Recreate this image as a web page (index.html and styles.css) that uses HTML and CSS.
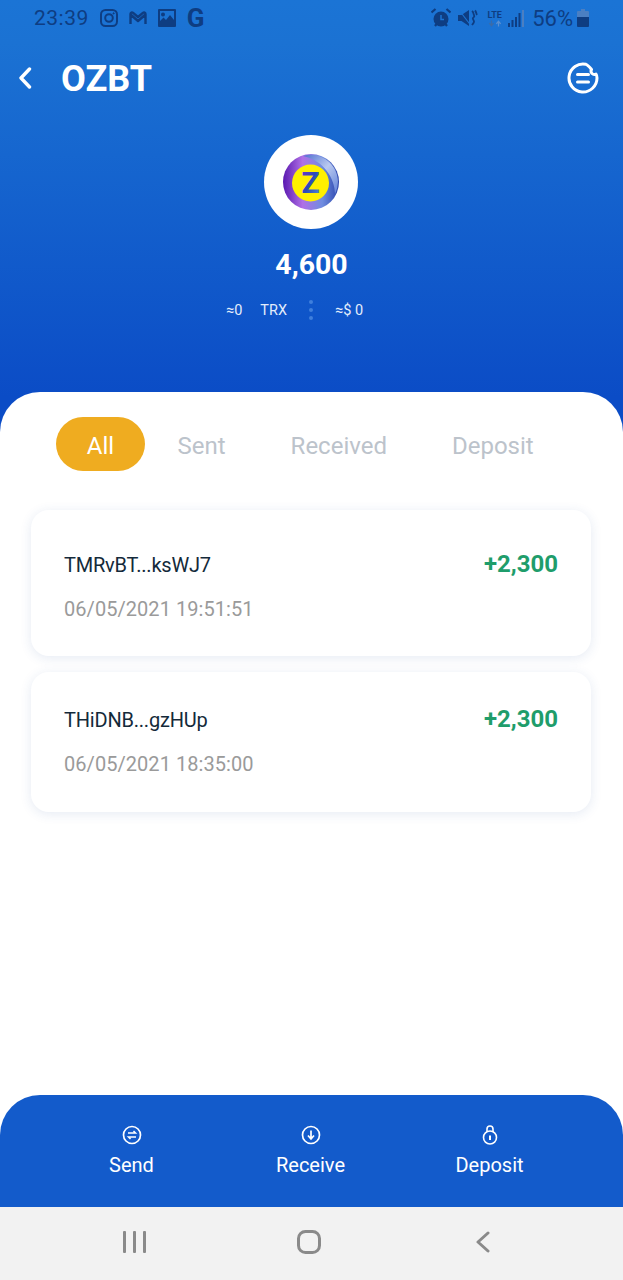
FILE: index.html
```html
<!DOCTYPE html>
<html lang="en">
<head>
    <meta charset="UTF-8">
    <meta name="viewport" content="width=device-width, initial-scale=1.0">
    <title>OZBT</title>
    <link rel="stylesheet" href="styles.css">
</head>
<body>
<div class="app">
    <div class="hero">
        <!-- Android status bar -->
        <div class="status">
            <div class="status-left">
                <span class="time">23:39</span>
                <svg class="ico" viewBox="0 0 18 18" fill="none" stroke="#0e3d82" stroke-width="2"><rect x="1" y="1" width="16" height="16" rx="4.5"/><circle cx="9" cy="9" r="3.8"/><circle cx="13.6" cy="4.4" r=".6" fill="#0e3d82" stroke-width="1"/></svg>
                <svg class="ico" viewBox="0 0 18 18" fill="none" stroke="#0e3d82" stroke-width="2.4" stroke-linejoin="round"><path d="M1.500 15V5c0-1.500 1.500-2 2.600-1.100L9 8l4.900-4.100c1.100-.9 2.600-.4 2.600 1.100v10M1.500 5.500L9 12l7.500-6.500"/></svg>
                <svg class="ico" viewBox="0 0 18 18"><path fill="#0e3d82" fill-rule="evenodd" d="M1 0h16a1 1 0 0 1 1 1v16a1 1 0 0 1-1 1H1a1 1 0 0 1-1-1V1a1 1 0 0 1 1-1zM2 2v10l3.500-3.500L8 11l4-5 4 5V2zM5 3.500a2 2 0 1 1 0 4 2 2 0 0 1 0-4z"/></svg>
                <span class="g-mark">G</span>
            </div>
            <div class="status-right">
                <svg class="ico alarm" viewBox="0 0 20 20"><circle cx="10" cy="11" r="7.500" fill="#0e3d82"/><path d="M10 7v4.500h3" fill="none" stroke="#1b73d3" stroke-width="1.500"/><path d="M0.500 4.500L4.500 1M19.500 4.500L15.500 1M4 18l1.500-2M16 18l-1.500-2" stroke="#0e3d82" stroke-width="2.200" fill="none"/></svg>
                <svg class="ico mute" viewBox="0 0 20 18"><path fill="#0e3d82" d="M0 6h3.500L11 1v16l-7.500-5H0z"/><path d="M1 1l11.500 15" stroke="#1b73d3" stroke-width="1.200"/><path d="M14 2c2 1.500 1 2.500 2 4s0 2-1 3 1 2 1 3.500-1 2-2 3.500M17 1.500c1.500 1.500 1 3 2 4.500" fill="none" stroke="#0e3d82" stroke-width="1.800"/></svg>
                <span class="lte">LTE<svg viewBox="0 0 16 7" class="lte-arrows"><path d="M4 0v5M1.500 3L4 6l2.500-3" stroke="#3b6ba8" fill="none" stroke-width="1.400"/><path d="M12 7V2M9.500 4L12 1l2.500 3" stroke="#5b8fd0" fill="none" stroke-width="1.400"/></svg></span>
                <svg class="ico signal" viewBox="0 0 16 18"><path fill="#0e3d82" d="M0 14h2v4H0zM3.500 11h2v7h-2zM7 8h2v10H7zM10.500 4h2v14h-2z"/><path fill="#4b7fc2" d="M14 1h2v17h-2z"/></svg>
                <span class="pct">56%</span>
                <svg class="ico batt" viewBox="0 0 12 18"><path fill="#4b7fc2" d="M4 0h4v2h3a1 1 0 0 1 1 1v5H0V3a1 1 0 0 1 1-1h3z"/><path fill="#0e3d82" d="M0 8h12v9a1 1 0 0 1-1 1H1a1 1 0 0 1-1-1z"/></svg>
            </div>
        </div>

        <div class="topbar">
            <div class="title-wrap">
                <svg class="back" viewBox="0 0 14 22" fill="none" stroke="#fff" stroke-width="3.400" stroke-linecap="round" stroke-linejoin="round"><path d="M11.500 2L3 11l8.500 9"/></svg>
                <h1 class="title">OZBT</h1>
            </div>
            <svg class="menu" viewBox="0 0 32 32" fill="none" stroke="#fff" stroke-width="3" stroke-linecap="round" stroke-linejoin="round"><path d="M19 2.300A14 14 0 1 0 30 16c0-1.500-.3-3-1-4-1 .5-3 .5-4-.5s-1-3-.5-4C23 5.500 21 3 19 2.300z"/><path d="M10.500 12.500h11M10.500 20h11"/></svg>
        </div>

        <div class="token">
            <div class="token-logo">
                <svg viewBox="0 0 56 56" width="56" height="56">
                    <defs>
                        <linearGradient id="ring" x1="0" y1="0" x2="1" y2="0">
                            <stop offset="0" stop-color="#5a18b0"/>
                            <stop offset=".35" stop-color="#b070e6"/>
                            <stop offset=".7" stop-color="#6f8de0"/>
                            <stop offset="1" stop-color="#2c45ac"/>
                        </linearGradient>
                        <linearGradient id="crescent" x1="0" y1="0" x2="1" y2="1">
                            <stop offset="0" stop-color="#4f6fd0"/>
                            <stop offset=".5" stop-color="#b9c9f0"/>
                            <stop offset="1" stop-color="#5f80d8"/>
                        </linearGradient>
                        <linearGradient id="zed" x1="0" y1="0" x2="1" y2="1">
                            <stop offset="0" stop-color="#7a2fd0"/>
                            <stop offset=".5" stop-color="#2a4bb8"/>
                            <stop offset="1" stop-color="#5a8fd8"/>
                        </linearGradient>
                    </defs>
                    <circle cx="28" cy="28" r="28" fill="url(#ring)"/>
                    <path d="M20 2a27 27 0 0 1 32 38c0-16-12-34-32-38z" fill="url(#crescent)"/>
                    <circle cx="27.500" cy="29" r="18.500" fill="#fff000"/>
                    <text x="27.500" y="39" class="logo-z" fill="url(#zed)">Z</text>
                </svg>
            </div>
            <div class="balance">4,600</div>
            <div class="meta">
                <div class="meta-left"><span>≈0</span><span>TRX</span></div>
                <div class="dots"><i></i><i></i><i></i></div>
                <div class="meta-right"><span>≈$ 0</span></div>
            </div>
        </div>
    </div>

    <div class="sheet">
        <div class="tabs">
            <div class="tab active">All</div>
            <div class="tab">Sent</div>
            <div class="tab">Received</div>
            <div class="tab">Deposit</div>
        </div>
        <div class="list">
            <div class="tx tx-first">
                <div class="tx-info">
                    <div class="tx-addr">TMRvBT...ksWJ7</div>
                    <div class="tx-date">06/05/2021 19:51:51</div>
                </div>
                <div class="tx-amount">+2,300</div>
            </div>
            <div class="tx">
                <div class="tx-info">
                    <div class="tx-addr">THiDNB...gzHUp</div>
                    <div class="tx-date">06/05/2021 18:35:00</div>
                </div>
                <div class="tx-amount">+2,300</div>
            </div>
        </div>
    </div>

    <div class="actions">
        <div class="action">
            <svg viewBox="0 0 20 20" fill="none" stroke="#fff" stroke-width="1.700"><circle cx="10" cy="10" r="8.500"/><path d="M6 8h7.500L11.500 6M14 12H6.500l2 2" stroke-width="1.500"/></svg>
            <span>Send</span>
        </div>
        <div class="action">
            <svg viewBox="0 0 20 20" fill="none" stroke="#fff" stroke-width="1.700"><circle cx="10" cy="10" r="8.500"/><path d="M10 5.500v8M7 10.500l3 3.500 3-3.500" stroke-width="1.700"/></svg>
            <span>Receive</span>
        </div>
        <div class="action">
            <svg viewBox="0 0 20 20" fill="none" stroke="#fff" stroke-width="1.600"><circle cx="10" cy="12.500" r="6.500"/><path d="M7 7V4a3 3 0 0 1 6 0v3"/><path d="M10 10.500v4.500" stroke-width="2"/></svg>
            <span>Deposit</span>
        </div>
    </div>

    <!-- Android nav bar -->
    <div class="navbar">
        <svg class="nav-recent" viewBox="0 0 24 22" fill="#8a8a8a"><rect x="0" y="0" width="3" height="22" rx="1"/><rect x="10" y="0" width="3" height="22" rx="1"/><rect x="20" y="0" width="3" height="22" rx="1"/></svg>
        <svg class="nav-home" viewBox="0 0 24 24" fill="none" stroke="#8a8a8a" stroke-width="3"><rect x="1.500" y="1.500" width="21" height="21" rx="7"/></svg>
        <svg class="nav-back" viewBox="0 0 14 22" fill="none" stroke="#8a8a8a" stroke-width="3" stroke-linecap="round" stroke-linejoin="round"><path d="M12 2L2 11l10 9"/></svg>
    </div>
</div>
</body>
</html>
```

FILE: styles.css
```css
* {
    box-sizing: border-box;
}
body {
    margin: 0;
    font-family: Roboto, "Liberation Sans", sans-serif;
    background: #fff;
}
.app {
    display: flex;
    flex-direction: column;
    width: 623px;
    height: 1280px;
    overflow: hidden;
    background: #fff;
}

/* top part */
.hero {
    height: 432px;
    flex-shrink: 0;
    background: linear-gradient(180deg, #1b74d5 0%, #1b72d3 10%, #0b4cc6 92%, #0b4cc6 100%);
}
.status {
    display: flex;
    justify-content: space-between;
    align-items: center;
    height: 36px;
    padding: 0 34px;
    color: #0e3d82;
}
.status-left,
.status-right {
    display: flex;
    align-items: center;
}
.time {
    font-size: 21px;
    letter-spacing: .5px;
    margin-right: 11px;
}
.ico {
    width: 18px;
    height: 18px;
    margin-right: 11px;
    display: block;
}
.g-mark {
    font-size: 26px;
    font-weight: 700;
    line-height: 18px;
}
.status-right .ico {
    margin-right: 0;
}
.status-right .alarm {
    width: 20px;
    height: 20px;
    margin-right: 7px;
}
.status-right .mute {
    width: 20px;
    margin-right: 8px;
}
.lte {
    display: flex;
    flex-direction: column;
    align-items: center;
    width: 17px;
    font-size: 9px;
    font-weight: 700;
    line-height: 10px;
    margin-right: 5px;
}
.lte-arrows {
    width: 14px;
    height: 7px;
    display: block;
}
.status-right .signal {
    width: 16px;
    margin-right: 8px;
}
.pct {
    font-size: 22px;
    margin-right: 4px;
}
.status-right .batt {
    width: 12px;
}
.topbar {
    display: flex;
    justify-content: space-between;
    align-items: center;
    height: 60px;
    padding: 0 24px 0 18px;
    margin-top: 12px;
}
.title-wrap {
    display: flex;
    align-items: center;
}
.back {
    width: 14px;
    height: 22px;
    display: block;
}
.title {
    margin: 2px 0 0 29px;
    font-size: 36px;
    font-weight: 700;
    color: #fff;
}
.menu {
    width: 32px;
    height: 32px;
    display: block;
}
.token {
    display: flex;
    flex-direction: column;
    align-items: center;
    margin-top: 27px;
    color: #fff;
}
.token-logo {
    display: flex;
    justify-content: center;
    align-items: center;
    width: 94px;
    height: 94px;
    margin-right: 1px;
    border-radius: 50%;
    background: #fff;
}
.logo-z {
    font-family: Roboto, sans-serif;
    font-size: 30px;
    font-weight: 700;
    text-anchor: middle;
}
.balance {
    margin-top: 19px;
    font-size: 28.5px;
    font-weight: 700;
    line-height: 34px;
}
.meta {
    display: grid;
    grid-template-columns: 1fr auto 1fr;
    align-items: center;
    gap: 22px;
    width: 100%;
    padding-right: 1px;
    margin-top: 18px;
    font-size: 14.5px;
    color: #e3edfb;
}
.meta-left {
    display: flex;
    justify-content: flex-end;
    gap: 18px;
}
.dots {
    display: flex;
    flex-direction: column;
    gap: 4px;
}
.dots i {
    display: block;
    width: 4px;
    height: 4px;
    border-radius: 50%;
    background: #3f7fdc;
}

/* white sheet */
.sheet {
    flex: 1;
    margin-top: -40px;
    border-radius: 40px 40px 0 0;
    background: #fff;
    position: relative;
    padding: 25px 32px 0 31px;
}
.tabs {
    display: flex;
    padding-left: 25px;
}
.tab {
    height: 54px;
    padding: 0 32.5px;
    border-radius: 27px;
    font-size: 24px;
    line-height: 59px;
    color: #bcc3cb;
}
.tab.active {
    width: 89px;
    padding: 0;
    text-align: center;
    background: #efac20;
    color: #fff;
}
.list {
    display: flex;
    flex-direction: column;
    gap: 16px;
    margin-top: 39px;
}
.tx {
    display: flex;
    justify-content: space-between;
    align-items: flex-start;
    height: 140px;
    padding: 33px 33px 0 33px;
    border-radius: 18px;
    background: #fff;
    box-shadow: 0 2px 12px rgba(40, 80, 160, .12);
}
.tx-first {
    height: 146px;
    padding-top: 40px;
}
.tx-addr {
    font-size: 20px;
    letter-spacing: -.2px;
    line-height: 30px;
    color: #142a3a;
}
.tx-date {
    margin-top: 14px;
    font-size: 20px;
    letter-spacing: .05px;
    line-height: 30px;
    color: #9a9a9a;
}
.tx-amount {
    font-size: 24px;
    font-weight: 700;
    line-height: 28px;
    color: #1f9d6b;
}

/* bottom */
.actions {
    display: grid;
    grid-template-columns: repeat(3, 179px);
    justify-content: center;
    height: 112px;
    flex-shrink: 0;
    padding: 30px 2px 0 0;
    border-radius: 40px 40px 0 0;
    background: #135bcb;
    color: #fff;
}
.action {
    display: flex;
    flex-direction: column;
    align-items: center;
    font-size: 20px;
}
.action svg {
    width: 20px;
    height: 20px;
    display: block;
    margin-bottom: 8px;
}
.navbar {
    display: grid;
    grid-template-columns: repeat(3, 174px);
    justify-content: center;
    justify-items: center;
    align-items: center;
    height: 73px;
    flex-shrink: 0;
    padding: 0 6px 4px 0;
    background: #f2f2f2;
}
.nav-recent {
    width: 24px;
    height: 22px;
}
.nav-home {
    width: 24px;
    height: 24px;
}
.nav-back {
    width: 14px;
    height: 22px;
}
```
